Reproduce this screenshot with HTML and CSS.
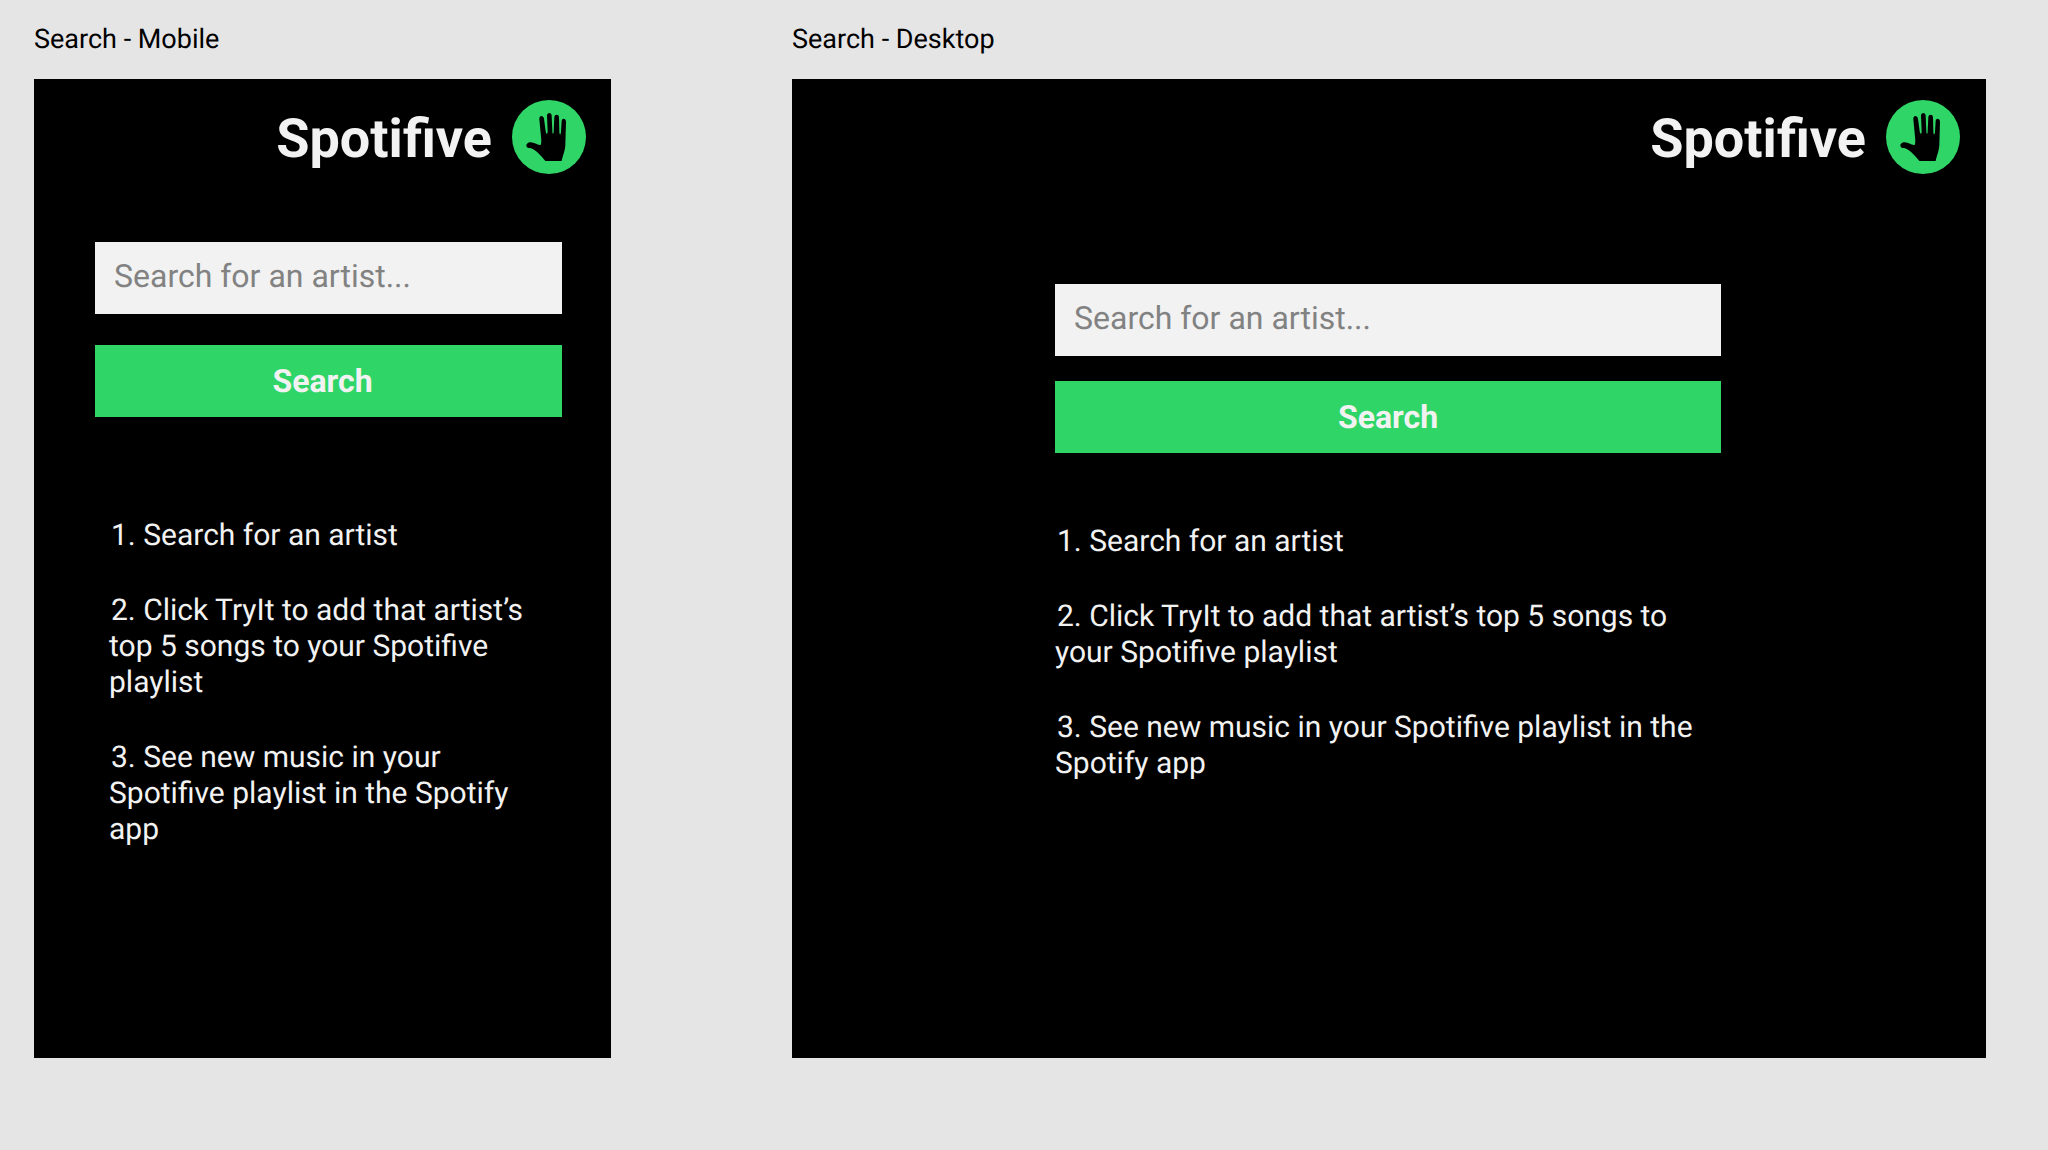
FILE: index.html
```html
<!DOCTYPE html>
<html lang="en">
<head>
<meta charset="utf-8">
<title>Spotifive search</title>
<link rel="stylesheet" href="styles.css">
</head>
<body>
<svg class="sprite" aria-hidden="true">
  <symbol id="hand-logo" viewBox="36 30 222 222">
    <circle class="logo-disc" cx="147" cy="141" r="111"/>
    <path d="M80 170C77 162 84 157 92 157C103 157 112 166 121 165C125 163 124 150 123 140L118 88C117 75 130 75 132 86L137 123C138 133 143 134 143 124L141 77C141 66 155 66 155 77L157 124C157 134 161 134 161 124L163 82C163 72 177 72 177 82L178 124C178 136 182 136 183 126L185 92C186 83 198 84 198 95L196 165C195 185 188 197 185 213H136C120 193 104 177 90 174C85 173 81 173 80 170Z"/>
  </symbol>
</svg>
<main class="board">
  <section class="screen">
    <h2 class="screen-label">Search - Mobile</h2>
    <div class="frame frame-mobile">
      <header class="brand">
        <h1 class="brand-name">Spotifive</h1>
        <svg class="brand-logo" role="img" aria-label="Spotifive logo"><use href="#hand-logo"/></svg>
      </header>
      <form class="search">
        <input class="search-input" type="text" placeholder="Search for an artist..." aria-label="Search for an artist">
        <button class="search-button" type="button">Search</button>
      </form>
      <ol class="steps">
        <li>1. Search for an artist</li>
        <li>2. Click TryIt to add that artist’s top 5 songs to your Spotifive playlist</li>
        <li>3. See new music in your Spotifive playlist in the Spotify app</li>
      </ol>
    </div>
  </section>
  <section class="screen">
    <h2 class="screen-label">Search - Desktop</h2>
    <div class="frame frame-desktop">
      <header class="brand">
        <h1 class="brand-name">Spotifive</h1>
        <svg class="brand-logo" role="img" aria-label="Spotifive logo"><use href="#hand-logo"/></svg>
      </header>
      <form class="search">
        <input class="search-input" type="text" placeholder="Search for an artist..." aria-label="Search for an artist">
        <button class="search-button" type="button">Search</button>
      </form>
      <ol class="steps">
        <li>1. Search for an artist</li>
        <li>2. Click TryIt to add that artist’s top 5 songs to your Spotifive playlist</li>
        <li>3. See new music in your Spotifive playlist in the Spotify app</li>
      </ol>
    </div>
  </section>
</main>
</body>
</html>
```
FILE: styles.css
```css
* {
  box-sizing: border-box;
}

body {
  margin: 0;
  background: #e5e5e5;
  font-family: Roboto, "Liberation Sans", sans-serif;
  text-rendering: geometricPrecision;
}

.sprite {
  display: none;
}

.board {
  display: grid;
  grid-template-columns: minmax(0, 577fr) minmax(0, 1194fr);
  column-gap: 181px;
  min-height: 100vh;
  padding: 23px 62px 92px 34px;
}

.screen {
  display: flex;
  flex-direction: column;
}

.screen-label {
  margin: 0 0 24px;
  color: #000;
  font-size: 27px;
  font-weight: 400;
  line-height: 32px;
}

.frame {
  flex: 1;
  background: #000;
  color: #f2f2f2;
}

.brand {
  display: flex;
  justify-content: flex-end;
  align-items: center;
  gap: 20px;
  padding: 21px 25px 0;
}

.brand-name {
  margin: 0;
  padding-top: 5px;
  font-size: 54px;
  font-weight: 700;
  line-height: 64px;
}

.brand-logo {
  width: 74px;
  height: 74px;
}

.logo-disc {
  fill: #2fd667;
}

.search {
  display: flex;
  flex-direction: column;
}

.search-input,
.search-button {
  width: 100%;
  height: 72px;
  border: 0;
  border-radius: 0;
  font-family: inherit;
  font-size: 32px;
  text-rendering: inherit;
}

.search-input {
  padding: 0 19px 5px;
  background: #f2f2f2;
  color: #000;
}

.search-input::placeholder {
  color: #828282;
  opacity: 1;
}

.search-button {
  background: #2fd667;
  color: #f2f2f2;
  font-weight: 700;
}

.steps {
  display: flex;
  flex-direction: column;
  gap: 39px;
  margin: 0;
  padding: 0;
  font-size: 30px;
  line-height: 36px;
  list-style: none;
}

.steps li {
  text-indent: 2px;
}

.frame-mobile .search {
  gap: 31px;
  margin: 68px 49px 0 61px;
}

.frame-mobile .search-button {
  padding: 0 18px 0 6px;
}

.frame-mobile .steps {
  margin: 101px 49px 0 75px;
}

.frame-desktop {
  padding-right: 2px;
}

.frame-desktop .brand {
  padding-right: 24px;
}

.frame-desktop .search,
.frame-desktop .steps {
  width: 100%;
  max-width: 666px;
  margin: 110px auto 0;
}

.frame-desktop .search {
  gap: 25px;
}

.frame-desktop .steps {
  margin-top: 71px;
}
```
